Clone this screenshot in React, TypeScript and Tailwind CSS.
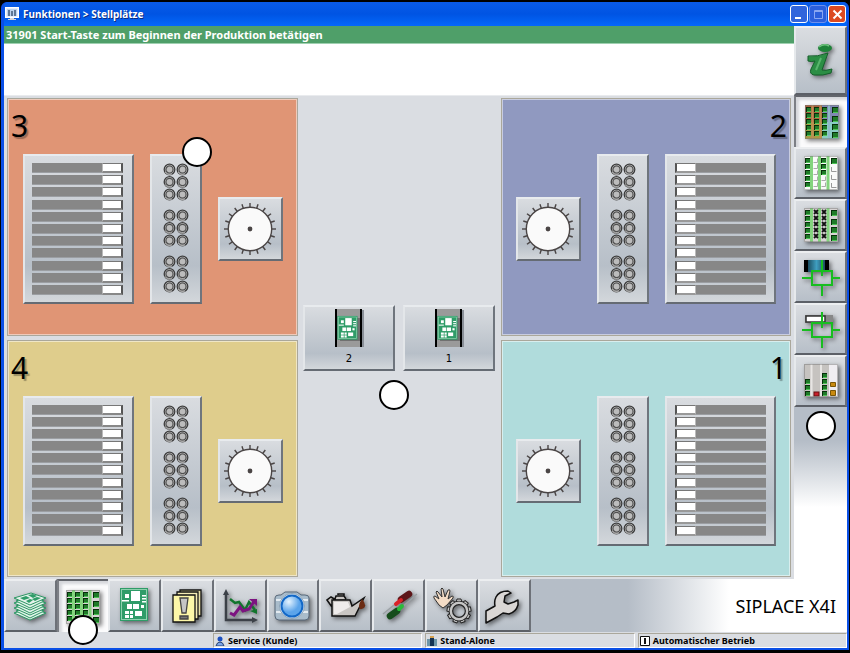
import React from "react";

const SANS = "font-['Noto_Sans',sans-serif]";

const raised =
  "bg-linear-to-b from-[#dadde1] via-[#c9ced4] to-[#b7bfc8] border-2 border-t-[#eceef0] border-l-[#e6e9ec] border-r-[#6d7178] border-b-[#5c6067]";

const pressed =
  "border-t-2 border-l-2 border-t-[#62656b] border-l-[#7c7f85] bg-[#fbfbfc] shadow-[inset_3px_3px_3px_#d4d6da]";

const plate =
  "bg-linear-to-b from-[#d9dce0] from-0% via-[#b7bfc8] via-75% to-[#d3d7db] to-100% border-2 border-t-[#e8ebee] border-l-[#e3e6e9] border-r-[#6f757d] border-b-[#656b73]";

function Callout({ className = "" }: { className?: string }) {
  return (
    <span
      className={`block size-[30px] shrink-0 rounded-full border-2 border-black bg-white ${className}`}
    />
  );
}

function Feeders({ mirrored }: { mirrored: boolean }) {
  return (
    <button
      type="button"
      aria-label="Zuführungen"
      className={`flex h-[150px] w-[111px] shrink-0 flex-col justify-between py-[7px] ${
        mirrored ? "px-2" : "pr-[9px] pl-[7px]"
      } ${plate}`}
    >
      {Array.from({ length: 11 }, (_, i) => (
        <span
          key={i}
          className={`flex h-[10px] w-full border-b border-[#9b9ea2] bg-[#878787] ${
            mirrored ? "justify-start" : "justify-end"
          }`}
        >
          <span
            className={`h-[10px] w-[21px] border bg-white ${
              mirrored
                ? "border-t-[#777] border-l-2 border-l-[#555] border-r-[#bbb] border-b-2 border-b-[#999]"
                : "border-t-[#777] border-l-[#bbb] border-r-2 border-r-[#555] border-b-2 border-b-[#888]"
            }`}
          />
        </span>
      ))}
    </button>
  );
}

function NozzleGroup() {
  const rows = [6, 18.5, 31];
  return (
    <svg width="26" height="38" viewBox="0 0 26 38">
      {rows.map((y) =>
        [6, 19].map((x) => (
          <g key={`${x}-${y}`}>
            <circle cx={x + 0.5} cy={y + 0.5} r="5.3" fill="#d8d8d8" stroke="#3c3c3c" strokeWidth="1.3" />
            <circle cx={x + 0.5} cy={y + 0.5} r="3.6" fill="#bcbcbc" stroke="#505050" strokeWidth="1.3" />
            <path d={`M${x - 4} ${y + 3} A5 5 0 0 0 ${x + 3} ${y + 5}`} fill="none" stroke="#f4f4f4" strokeWidth=".6" />
          </g>
        )),
      )}
    </svg>
  );
}

function Nozzles() {
  return (
    <button
      type="button"
      aria-label="Pipettenmagazin"
      className={`flex h-[150px] w-[52px] shrink-0 flex-col items-center gap-2 pt-[7px] ${plate}`}
    >
      <NozzleGroup />
      <NozzleGroup />
      <NozzleGroup />
    </button>
  );
}

function Wheel() {
  return (
    <button
      type="button"
      aria-label="Pipettenwechsler"
      className={`mt-[43px] flex h-[64px] w-[65px] shrink-0 items-center justify-center ${plate}`}
    >
      <svg width="54" height="54" viewBox="-26 -27 54 54">
        {Array.from({ length: 20 }, (_, i) => (
          <path key={i} d="M0 -21 V-26" stroke="#4a4545" strokeWidth="1.4" transform={`rotate(${i * 18})`} />
        ))}
        <circle r="21.7" fill="#fafafa" stroke="#4a4545" strokeWidth="1.4" />
        <circle r="2.4" fill="#4a4545" />
      </svg>
    </button>
  );
}

type StationProps = {
  number: string;
  color: string;
  mirrored?: boolean;
  children?: React.ReactNode;
};

function Station({ number, color, mirrored = false, children }: StationProps) {
  return (
    <section
      className={`relative flex-1 border border-[#aaa79b] outline-1 -outline-offset-2 outline-white/50 ${color}`}
    >
      <h2
        className={`px-[3px] pt-2 text-[30px] leading-[38px] text-black text-shadow-[2px_2px_1px_rgb(0_0_0/0.3)] ${SANS} ${
          mirrored ? "text-right" : ""
        }`}
      >
        {number}
      </h2>
      <div
        className={`flex gap-4 pt-[9px] pb-7 ${mirrored ? "flex-row-reverse pr-[14px]" : "pl-[15px]"}`}
      >
        <Feeders mirrored={mirrored} />
        <Nozzles />
        <Wheel />
      </div>
      {children}
    </section>
  );
}

function Shadow({ children }: { children: React.ReactNode }) {
  return (
    <svg
      width="40"
      height="40"
      viewBox="0 0 40 40"
      className="shrink-0 drop-shadow-[2px_2px_2px_rgb(0_0_0/0.5)]"
    >
      {children}
    </svg>
  );
}

function BoardPattern() {
  return (
    <>
      <rect x="6" y="2" width="28" height="33" fill="#2f9c68" />
      <rect x="7.5" y="3.5" width="25" height="30" fill="none" stroke="#8fd0ae" />
      <g fill="#fff">
        <rect x="17" y="5" width="9" height="10" />
        <rect x="11" y="8" width="4" height="4" />
        <rect x="8" y="14" width="7" height="1.5" />
        <rect x="28" y="9" width="4" height="1.5" />
        <rect x="28" y="12" width="4" height="1.5" />
        <rect x="28" y="15" width="4" height="1.5" />
        <rect x="13" y="18" width="5" height="5" />
        <rect x="19" y="18" width="6" height="5" />
        <rect x="27" y="19" width="3" height="3" />
        <rect x="11" y="25" width="4" height="3" />
        <rect x="16" y="25" width="3" height="3" />
        <rect x="11" y="29" width="4" height="3" />
        <rect x="16" y="29" width="3" height="3" />
        <rect x="21" y="25" width="7" height="5" />
      </g>
    </>
  );
}

function GreenPad({ x, y, size = 5 }: { x: number; y: number; size?: number }) {
  return (
    <g>
      <rect x={x} y={y} width={size} height={size} fill="#06300a" />
      <rect x={x + 1} y={y + 1} width={size - 1} height={size - 1} fill="#1f7a28" />
      <rect x={x + 1} y={y + size - 1} width={size - 1} height="1" fill="#4cc455" />
    </g>
  );
}

function PadColumns({ variant }: { variant: "plain" | "color" | "empty" | "crossed" }) {
  const rows = [5, 11, 17, 23, 29];
  const bigRows = [5, 14, 22, 30];
  return (
    <>
      <rect x="3" y="3" width="34" height="34" fill={variant === "empty" ? "#fafafa" : "#d8d4d4"} />
      {variant === "color" ? (
        <>
          <rect x="3" y="3" width="18" height="17" fill="#a8603e" />
          <rect x="3" y="20" width="18" height="17" fill="#a89a44" />
          <rect x="20" y="3" width="17" height="17" fill="#8087b4" />
          <rect x="20" y="20" width="17" height="17" fill="#8accc4" />
          <path d="M10.500 3V37M18.500 3V37" stroke="#bd8c54" strokeWidth="2" />
          <path d="M27 3V37" stroke="#8fb8c8" strokeWidth="2" />
        </>
      ) : (
        <path d="M10.500 3V37M18.500 3V37M27 3V37" stroke="#84d47e" strokeWidth="3" />
      )}
      {rows.map((y, r) =>
        [4, 12, 20].map((x, c) => {
          if (variant === "crossed" && c > 0) {
            return (
              <path
                key={`${x}-${y}`}
                d={`M${x + 1} ${y}l4 4M${x + 5} ${y}l-4 4`}
                stroke="#111"
                strokeWidth="1.800"
              />
            );
          }
          if (variant === "empty" && (c === 1 || (c === 2 && r > 2))) {
            return (
              <path key={`${x}-${y}`} d={`M${x + 0.5} ${y + 4.5}h4v-4`} stroke="#aaa" fill="none" />
            );
          }
          return <GreenPad key={`${x}-${y}`} x={x} y={y} />;
        }),
      )}
      {bigRows.map((y, r) =>
        variant === "empty" && r > 0 ? (
          <path key={y} d={`M30.500 ${y}v4.500h5`} stroke="#999" fill="none" />
        ) : (
          <GreenPad key={y} x={30} y={y} size={6} />
        ),
      )}
      <rect x="3.5" y="3.5" width="33" height="33" fill="none" stroke="#777" strokeOpacity=".5" />
    </>
  );
}

function Crosshair() {
  return (
    <path
      d="M11 14H31V28H11ZM1 21H11M31 21H39M21 3V19M21 28V39"
      fill="none"
      stroke="#18bd20"
      strokeWidth="2"
    />
  );
}

const sideButtons = [
  { label: "Alle Stellplätze", active: true, icon: <PadColumns variant="color" /> },
  { label: "Leere Stellplätze", icon: <PadColumns variant="empty" /> },
  { label: "Gesperrte Stellplätze", icon: <PadColumns variant="crossed" /> },
  {
    label: "Gurt einmessen",
    icon: (
      <>
        <defs>
          <linearGradient id="tape">
            <stop offset="0" stopColor="#0b2733" />
            <stop offset=".5" stopColor="#3f9ec0" />
            <stop offset="1" stopColor="#123" />
          </linearGradient>
        </defs>
        <rect x="3" y="3" width="25" height="12" fill="url(#tape)" />
        <path d="M3 3h4v12H3zM24 3h4v12h-4z" fill="#000" />
        <Crosshair />
      </>
    ),
  },
  {
    label: "Zuführung einmessen",
    icon: (
      <>
        <rect x="4" y="6" width="28" height="8" fill="#888" />
        <rect x="5" y="7" width="19" height="6" fill="#fff" stroke="#333" strokeWidth="1.500" />
        <Crosshair />
      </>
    ),
  },
  {
    label: "Füllstand",
    icon: (
      <>
        <rect x="3" y="3" width="34" height="33" fill="#c6c3c0" />
        <rect x="28" y="3" width="9" height="33" fill="#f0eef2" />
        <path d="M10.500 3v33M20 3v33" stroke="#e8e6e4" strokeWidth="2" />
        {[18, 24, 30].map((y) => (
          <GreenPad key={y} x={4} y={y} />
        ))}
        <rect x="13" y="31" width="5" height="4" fill="#c8202c" stroke="#611" />
        {[12, 18, 24, 30].map((y) => (
          <GreenPad key={y} x={21} y={y} />
        ))}
        <path d="M29.500 21.500h5v4h-5zM29.500 29.500h5v5h-5z" fill="#c98a10" stroke="#7a5608" />
        <rect x="3.500" y="3.500" width="33" height="32" fill="none" stroke="#777" strokeOpacity=".5" />
      </>
    ),
  },
];

const toolButtons = [
  {
    label: "Aufträge",
    icon: (
      <g stroke="#2b9663" strokeWidth="1" fill="#e3f2ea">
        {[28, 26, 23, 21, 18, 16, 13].map((y, i) => (
          <path key={y} d={`M${i % 2 ? 6 : 4} ${y - 1} L21 ${y - 6} L${i % 2 ? 34 : 36} ${y - 1} L20 ${y + 6}Z`} />
        ))}
        <path
          d="M10 12l6-2 4 2-6 2zM18 9l5-1 4 2-4 2zM22 13l5-2 4 1-6 3zM16 15l4-2 3 1-4 3z"
          fill="#2f9c68"
          stroke="none"
        />
      </g>
    ),
  },
  { label: "Stellplätze", active: true, icon: <PadColumns variant="plain" /> },
  { label: "Leiterplatte", icon: <BoardPattern /> },
  {
    label: "Meldungen",
    icon: (
      <g stroke="#111" strokeWidth="1.300">
        <path d="M13 4h21v26h-21z" fill="#e9e0a8" />
        <path d="M10 6h21v27h-21z" fill="#f5ecb4" />
        <path d="M6 9h22v27H6z" fill="#fdf7a8" />
        <path d="M13 12h8l-2 15h-4z" fill="#c5c5c5" stroke="#444" />
        <path d="M13 30h8v3h-8z" fill="#777" stroke="#444" />
      </g>
    ),
  },
  {
    label: "Statistik",
    icon: (
      <>
        <path d="M6 7V34H34" fill="none" stroke="#3c4148" strokeWidth="2.500" />
        <path d="M3 9l3-6 3 6zM32 31l6 3-6 3z" fill="#3c4148" />
        <path d="M10 13l5 4 4-1 6 8 4-8 6 8" fill="none" stroke="#11752c" strokeWidth="2.500" />
        <path d="M10 27l4 2 6-8 3 4 6-2 6-9" fill="none" stroke="#7c1480" strokeWidth="3" />
        <path d="M29 13h8v7z" fill="#7c1480" />
        <path d="M30 25l7-2v5z" fill="#11752c" />
      </>
    ),
  },
  {
    label: "Kamera",
    icon: (
      <>
        <defs>
          <radialGradient id="lens" cx=".35" cy=".3">
            <stop offset="0" stopColor="#e6f4ff" />
            <stop offset="1" stopColor="#5ba4ea" />
          </radialGradient>
        </defs>
        <path
          d="M2 12q0-3 4-3h2l4-3h12l4 3h4q4 0 4 3v18q0 4-4 4H6q-4 0-4-4z"
          fill="#a9bccb"
          stroke="#59697a"
        />
        <path d="M3 14h32M3 26h32" stroke="#e3eaf0" strokeWidth="2" />
        <circle cx="19" cy="20" r="12.500" fill="#edf3f9" stroke="#8ba3b8" strokeWidth="1" />
        <circle cx="19" cy="20" r="10.500" fill="url(#lens)" stroke="#1268c7" strokeWidth="2" />
      </>
    ),
  },
  {
    label: "Schmierung",
    icon: (
      <>
        <path
          d="M6 14h18l2 6 12-8-9 18H6zM6 21L1 14l4-3 5 3M9 13l1-3h8l2 3M12 9v-1h6v2"
          fill="#c9c6c3"
          stroke="#111"
          strokeWidth="1.500"
        />
        <path d="M8 16h14l2 5-13 7H8z" fill="#efeceb" />
        <path d="M36 13q5 6 2 9-5 3-5-2 0-3 3-7z" fill="#6b2c14" />
      </>
    ),
  },
  {
    label: "Wartung",
    icon: (
      <>
        <path d="M4 28L20 15M20 24L38 8" stroke="#9ba1a5" strokeWidth="1.500" />
        <g strokeLinecap="round">
          <path d="M22 13.500L30 8" stroke="#5d1518" strokeWidth="6.500" />
          <path d="M17 18L22 14" stroke="#db2228" strokeWidth="4" />
          <path d="M11 30L18 25" stroke="#164d1c" strokeWidth="6.500" />
          <path d="M20 23L23 20" stroke="#29bb3a" strokeWidth="4" />
        </g>
      </>
    ),
  },
  {
    label: "Handbetrieb",
    icon: (
      <>
        <path
          d="M7 19L2 12q-1-2 1-2l4 3-3-7q1-2 2 0l4 5-1-8q1-2 2 0l2 8 3-7q2-1 2 1l-2 8 4-3q2 0 1 2l-6 7-4 3z"
          fill="#f3dcc6"
          stroke="#333"
          strokeWidth="1"
        />
        {Array.from({ length: 9 }, (_, i) => (
          <path
            key={i}
            d="M24 17l1-4h4l1 4z"
            fill="#c6c6c6"
            stroke="#222"
            transform={`rotate(${i * 40} 27 25)`}
          />
        ))}
        <circle cx="27" cy="25" r="8" fill="none" stroke="#222" strokeWidth="4.500" />
        <circle cx="27" cy="25" r="8.200" fill="none" stroke="#c6c6c6" strokeWidth="2.500" />
      </>
    ),
  },
  {
    label: "Service",
    icon: (
      <path
        d="M1 37V25L10 20Q9 15 11 11Q14 5 23 5L26 7L20 10L19 16L23 18L29 16L33 14V19Q31 26 24 28L18 27L12 31Z"
        fill="#dad7d5"
        stroke="#111"
        strokeWidth="1.500"
        strokeLinejoin="round"
      />
    ),
  },
];

const statusItems = [
  {
    text: "Service (Kunde)",
    icon: (
      <>
        <path d="M1 10q1-4 4-4t4 4z" fill="#7ea6ea" stroke="#26406e" />
        <circle cx="5" cy="3" r="2.500" fill="#1b4fc0" />
      </>
    ),
  },
  {
    text: "Stand-Alone",
    icon: (
      <>
        <path d="M0 3h10v7H0z" fill="#6e96a8" />
        <path d="M3 2h4v8H3z" fill="#153354" />
        <path d="M3 0h4v2H3z" fill="#d6a252" />
      </>
    ),
  },
  {
    text: "Automatischer Betrieb",
    icon: (
      <>
        <path d="M.5 .5h9v9h-9z" fill="#fff" stroke="#111" />
        <path d="M4 2h2v6H4z" fill="#111" />
      </>
    ),
  },
];

function LaneButton({ lane }: { lane: string }) {
  return (
    <button
      type="button"
      className={`flex h-[66px] w-[92px] flex-col items-center pt-0.5 ${plate}`}
    >
      <svg width="32" height="40" viewBox="0 0 32 40">
        <rect x="2" y="0" width="26" height="38" fill="#9a9a9a" />
        <rect x="28" y="1" width="3" height="37" fill="#8a9098" />
        <rect x="7" y="9" width="20" height="23" fill="#707070" />
        <path d="M3 0v38M28 0v38" stroke="#000" strokeWidth="2" />
        <g transform="translate(0 5.500) scale(.72)">
          <BoardPattern />
        </g>
      </svg>
      <span className="mt-[3px] text-[10px] leading-[14px] font-['DejaVu_Sans',sans-serif]">{lane}</span>
    </button>
  );
}

function TitleBar() {
  const base =
    "flex size-[18px] items-center justify-center rounded-[3px] border";
  return (
    <header className="flex h-6 shrink-0 items-center gap-1 rounded-t-sm bg-linear-to-b from-[#0a5be8] via-[#0054e3] to-[#0468fb] pr-px pl-px">
      <svg width="14" height="14" viewBox="0 0 14 14">
        <rect x=".5" y=".5" width="13" height="10" fill="#e8eefb" stroke="#fff" />
        <rect x="2" y="2" width="10" height="7" fill="#bcd3ee" />
        <path d="M4 3v6M7 4v5M10 3v6" stroke="#3f5878" strokeWidth="1.500" />
        <path d="M5 11h4v1h2v1H3v-1h2z" fill="#d0d4dc" />
      </svg>
      <h1 className={`flex-1 text-[10px] leading-[14px] font-bold text-white text-shadow-[1px_1px_0_#0a2c80] ${SANS}`}>
        Funktionen &gt; Stellplätze
      </h1>
      <div className="flex gap-px">
        <button type="button" aria-label="Minimieren" className={`${base} border-white bg-[#3165dc]`}>
          <svg width="11" height="11" viewBox="0 0 11 11">
            <path d="M1 8h6v2H1z" fill="#fff" />
          </svg>
        </button>
        <button type="button" aria-label="Maximieren" disabled className={`${base} border-[#6f90ec] bg-[#2c5fdc]`}>
          <svg width="11" height="11" viewBox="0 0 11 11">
            <path d="M1.500 1.500h8v8h-8zM1 2.500h9" fill="none" stroke="#8aa7f2" />
          </svg>
        </button>
        <button type="button" aria-label="Schließen" className={`${base} border-white bg-[#dc4a22]`}>
          <svg width="11" height="11" viewBox="0 0 11 11">
            <path d="M1.500 1.500l8 8M9.500 1.500l-8 8" stroke="#fff" strokeWidth="2" />
          </svg>
        </button>
      </div>
    </header>
  );
}

function Sidebar() {
  return (
    <aside className="flex w-[53px] shrink-0 flex-col bg-linear-to-b from-[#b5bdc7] from-75% to-white to-87%">
      <button
        type="button"
        aria-label="Information"
        className={`flex h-[69px] items-center justify-center ${raised}`}
      >
        <Shadow>
          <ellipse cx="24" cy="7" rx="7" ry="4" fill="#1e8238" />
          <path d="M18 6q5-4 10-1" stroke="#6ec27c" fill="none" strokeWidth="1.500" />
          <path
            d="M7 15q9 1 20-3l-6 17q3 1 10-1l-1 4q-8 3-17 2-5-1-3-6l4-8q-4 1-7 0z"
            fill="#2c8e45"
            stroke="#145f2a"
          />
          <path d="M20 17l-5 12" stroke="#58b56c" strokeWidth="2" />
        </Shadow>
      </button>
      {sideButtons.map((item) => (
        <button
          key={item.label}
          type="button"
          aria-label={item.label}
          aria-pressed={Boolean(item.active)}
          className={`flex h-[52px] items-center justify-center ${item.active ? pressed : raised}`}
        >
          <Shadow>{item.icon}</Shadow>
        </button>
      ))}
      <Callout className="mx-auto mt-1" />
    </aside>
  );
}

export default function App() {
  return (
    <div className="flex min-h-screen flex-col bg-black px-px pt-[2px] pb-[3px]">
      <div className="flex flex-1 flex-col rounded-t-md bg-[#0a4fe6] pr-[2px] pb-[2px] pl-[3px]">
        <TitleBar />
        <div className="flex flex-1">
          <main className="flex min-w-0 flex-1 flex-col bg-[#dadde2]">
            <div className="h-[70px] border-b border-[#e9ebee] bg-white">
              <p
                className={`h-[18px] border-b border-[#9fd0b0] bg-[#4f9f69] pl-0.5 text-[11px] leading-[18px] font-bold text-white ${SANS}`}
              >
                31901 Start-Taste zum Beginnen der Produktion betätigen
              </p>
            </div>
            <div className="flex flex-1 py-[2px] pr-[3px] pl-[3px]">
              <div className="flex flex-1 flex-col gap-1">
                <Station number="3" color="bg-[#e09575]">
                  <Callout className="absolute top-[38px] left-[174px]" />
                </Station>
                <Station number="4" color="bg-[#dfcd8c]" />
              </div>
              <div className="relative flex w-[203px] shrink-0 items-center justify-center gap-2">
                <LaneButton lane="2" />
                <LaneButton lane="1" />
                <Callout className="absolute top-1/2 left-1/2 mt-[42px] -ml-5" />
              </div>
              <div className="flex flex-1 flex-col gap-1">
                <Station number="2" color="bg-[#9099c0]" mirrored />
                <Station number="1" color="bg-[#b0dcdc]" mirrored />
              </div>
            </div>
          </main>
          <Sidebar />
        </div>
        <nav className="flex h-[53px] items-center bg-linear-to-r from-[#b5bdc7] from-74% to-white to-86%">
          <div className="flex h-full w-[527px] shrink-0">
            {toolButtons.map((item) => (
              <button
                key={item.label}
                type="button"
                aria-label={item.label}
                aria-pressed={Boolean(item.active)}
                className={`relative flex flex-1 items-center justify-center ${item.active ? pressed : raised}`}
              >
                <Shadow>{item.icon}</Shadow>
                {item.active && <Callout className="absolute top-[34px] left-[9px]" />}
              </button>
            ))}
          </div>
          <p className={`ml-auto pr-[11px] text-[18px] leading-6 text-black ${SANS}`}>SIPLACE X4I</p>
        </nav>
        <footer className="grid h-[16px] grid-cols-[206px_1fr_1fr_1fr] gap-[3px] bg-[#dadde2] pt-px">
          <span />
          {statusItems.map((item) => (
            <div
              key={item.text}
              className={`flex items-center gap-[3px] border border-t-[#aaa79b] border-r-white border-b-white border-l-[#aaa79b] pl-px text-[9px] leading-[13px] font-bold text-black ${SANS}`}
            >
              <svg width="10" height="10" viewBox="0 0 10 10">
                {item.icon}
              </svg>
              {item.text}
            </div>
          ))}
        </footer>
      </div>
    </div>
  );
}
